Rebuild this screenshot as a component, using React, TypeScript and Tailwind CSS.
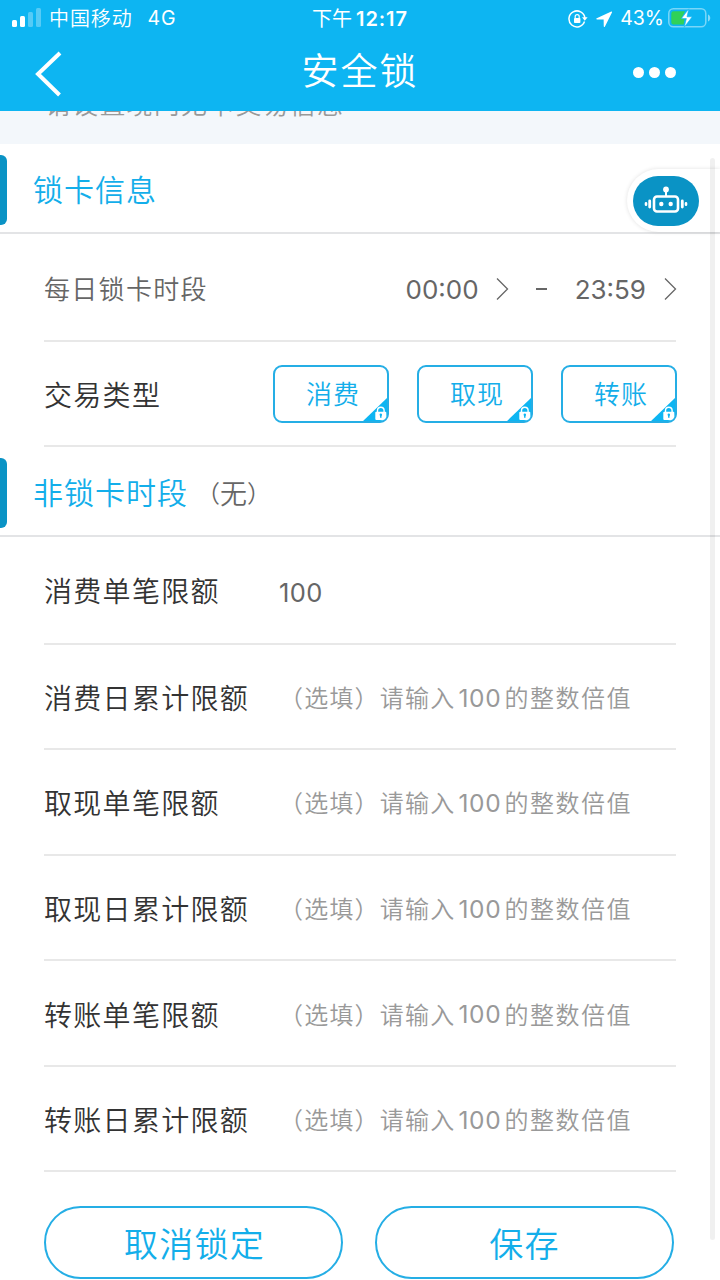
import type { ReactNode } from "react";

type LimitRow = {
  label: string;
  value?: string;
};

const TRADE_TYPES = ["消费", "取现", "转账"];

const LIMITS: LimitRow[] = [
  { label: "消费单笔限额", value: "100" },
  { label: "消费日累计限额" },
  { label: "取现单笔限额" },
  { label: "取现日累计限额" },
  { label: "转账单笔限额" },
  { label: "转账日累计限额" },
];

function StatusBar() {
  return (
    <div className="flex h-[37px] items-center text-[19px] leading-none font-normal">
      <div className="flex w-[290px] items-center pl-3">
        <svg className="-mt-[2px]" width="30" height="20" viewBox="0 0 30 20" fill="white">
          <rect x="0" y="12" width="5" height="7" rx="1.5" />
          <rect x="8" y="8" width="5" height="11" rx="1.5" />
          <rect x="16" y="4" width="5" height="15" rx="1.5" opacity="0.3" />
          <rect x="24" y="0" width="5" height="19" rx="1.5" opacity="0.3" />
        </svg>
        <span className="ml-[7px] pt-px text-[20px] font-[350] tracking-[0.9px]">中国移动</span>
        <span className="ml-[15px] pt-px text-[19.5px] tracking-[0.7px]">4G</span>
      </div>
      <div className="flex w-[140px] items-center justify-center pt-px whitespace-nowrap">
        <span className="text-[20px]">下午</span>
        <span className="ml-1 text-[20px] font-semibold tracking-[0.9px]">12:17</span>
      </div>
      <div className="flex flex-1 items-center justify-end pr-[9px]">
        <svg width="20" height="20" viewBox="0 0 20 20" fill="none">
          <path d="M16.5 12.6A8 8 0 1 1 16.9 9" stroke="white" strokeWidth="1.5" />
          <path d="M14 8.2h5.6l-2.8 3.6z" fill="white" />
          <rect x="6" y="9" width="6.4" height="5" rx="0.8" fill="white" />
          <path d="M7.2 9.2V7.6a2 2 0 0 1 4 0v1.6" stroke="white" strokeWidth="1.2" />
        </svg>
        <svg className="ml-2" width="17" height="18" viewBox="0 0 18 18" fill="white">
          <path d="M16.2 1.1 0.8 8.1c-.9.5-.6 1.3.3 1.3l7 .1.1 7.2c0 1 .9 1.2 1.3.3l7.4-15c.3-.7-.2-1.1-.7-.9z" />
        </svg>
        <span className="ml-[7px] text-[19.5px]">43%</span>
        <svg className="-mt-px ml-[4px]" width="43" height="20" viewBox="0 0 43 20" fill="none">
          <rect x="0.8" y="0.8" width="37" height="18" rx="4.6" stroke="white" strokeOpacity="0.45" strokeWidth="1.5" />
          <path d="M40 6.5v7c3-1.2 3-5.8 0-7z" fill="white" fillOpacity="0.5" />
          <path d="M5.5 3.2H17l-3.6 7.4h3.2l-1 5.9H5.5a2.2 2.2 0 0 1-2.2-2.2V5.4a2.2 2.2 0 0 1 2.2-2.2z" fill="#30d158" />
          <path d="M20.8 0.8 13.4 10.6h5l-2.2 8.6 8-10.4h-5.2z" fill="white" stroke="#0db5f2" strokeWidth="0.6" />
        </svg>
      </div>
    </div>
  );
}

function NavBar() {
  return (
    <div className="flex h-[74px] items-center justify-between pr-[44px] pl-[34px]">
      <svg className="-mt-px" width="28" height="46" viewBox="0 0 28 46" fill="none">
        <path d="M26 2 4 23l21.500 21" stroke="white" strokeWidth="4" />
      </svg>
      <h1 className="pb-[5px] pl-[25px] text-[37px] leading-none tracking-[2px]">安全锁</h1>
      <div className="-mt-[3px] flex gap-[5px]">
        <span className="size-[11px] rounded-full bg-white" />
        <span className="size-[11px] rounded-full bg-white" />
        <span className="size-[11px] rounded-full bg-white" />
      </div>
    </div>
  );
}

function SectionHeader({ title, children }: { title: string; children?: ReactNode }) {
  return (
    <div className="flex h-[90px] items-center border-b-2 border-[#e3e4e6] pt-[3px]">
      <span className="h-[70px] w-[7px] rounded-r-[6px] bg-[#0a93c5]" />
      <h2 className="ml-[26px] pt-px text-[30px] leading-none tracking-[1px] text-[#13aeea]">{title}</h2>
      {children}
    </div>
  );
}

function Chevron() {
  return (
    <svg width="13" height="24" viewBox="0 0 13 24" fill="none">
      <path d="m1 1.500 10.500 10.500L1 22.500" stroke="#666" strokeWidth="1.300" />
    </svg>
  );
}

function TradeTypeButton({ label }: { label: string }) {
  return (
    <button
      type="button"
      className="relative h-[58px] w-[116px] overflow-hidden rounded-[9px] border-2 border-[#25aee5] pt-[3px] pl-[4px] text-[26px] leading-none tracking-[1px] text-[#13aeea]"
    >
      {label}
      <svg className="absolute -right-px -bottom-px" width="26" height="25" viewBox="0 0 26 25">
        <path d="M26 0v25H0z" fill="#0db5f2" />
        <rect x="13.300" y="14.700" width="11" height="8.300" rx="1" fill="white" />
        <path d="M15.500 15v-1.500a3.300 3.300 0 0 1 6.600 0V15" fill="none" stroke="white" strokeWidth="1.400" />
        <path d="M18.800 17v3.700" stroke="#0db5f2" strokeWidth="1.500" />
        <circle cx="18.800" cy="17.700" r="1.200" fill="#0db5f2" />
      </svg>
    </button>
  );
}

function AssistantButton() {
  return (
    <div className="absolute top-[169px] right-0 z-20 flex h-[63px] w-[93px] items-center rounded-l-full bg-white pl-[6px] shadow-[0_0_4px_rgba(0,0,0,0.12)]">
      <button type="button" className="flex h-[50px] w-[66px] items-center justify-center rounded-[25px] bg-[#0a93c5]">
        <svg width="44" height="30" viewBox="0 0 44 30" fill="none" stroke="white">
          <rect x="10" y="10.500" width="24" height="15" rx="3" strokeWidth="2.600" />
          <circle cx="22" cy="3.500" r="2.900" fill="white" stroke="none" />
          <path d="M22 5v5" strokeWidth="2" />
          <circle cx="17.300" cy="18" r="2.200" fill="white" stroke="none" />
          <circle cx="26.700" cy="18" r="2.200" fill="white" stroke="none" />
          <path d="M5.700 15v6M38.300 15v6" strokeWidth="2.800" strokeLinecap="round" />
          <path d="M2 17.300v1.400M42 17.300v1.400" strokeWidth="2.600" strokeLinecap="round" />
        </svg>
      </button>
    </div>
  );
}

function LimitField({ label, value, first }: LimitRow & { first: boolean }) {
  return (
    <div className={`flex items-center border-b-2 border-[#e8e8e8] pt-[5px] ${first ? "h-[107.500px]" : "h-[105.600px]"}`}>
      <span className="w-[235px] text-[28px] leading-none tracking-[1.300px] text-[#333]">{label}</span>
      {value ? (
        <span className="text-[25.500px] leading-none font-normal tracking-[0.400px] text-[#666]">{value}</span>
      ) : (
        <span className="flex items-center text-[24px] leading-none whitespace-nowrap text-[#999]">
          <span className="tracking-[1.200px]">（选填）请输入</span>
          <span className="ml-[3px] pb-[2px] text-[24.500px] font-normal tracking-[0.700px]">100</span>
          <span className="ml-[3px] tracking-[1.500px]">的整数倍值</span>
        </span>
      )}
    </div>
  );
}

export default function App() {
  return (
    <div className="relative h-[1280px] w-[720px] overflow-hidden bg-white font-['Inter','Noto_Sans_CJK_SC',sans-serif] font-[350]">
      <header className="relative z-10 h-[111px] bg-[#0db5f2] text-white">
        <StatusBar />
        <NavBar />
      </header>

      {/* tail of the hint, scrolled under the header */}
      <div className="h-[33px] bg-[#f3f7fb] pl-[45px]">
        <p className="-translate-y-[19px] text-[26px] leading-none tracking-[1.200px] text-[#999]">请设置境内无卡交易信息</p>
      </div>

      <SectionHeader title="锁卡信息" />

      <div className="px-[44px]">
        <div className="flex h-[107.500px] items-center border-b-2 border-[#e8e8e8] pt-[5px] text-[26px] leading-none text-[#666]">
          <span className="flex-1 pt-px tracking-[1.300px]">每日锁卡时段</span>
          <span className="mr-[17px] pt-px font-normal">00:00</span>
          <Chevron />
          <span className="mr-[28px] ml-[27px] h-[2px] w-[11px] bg-[#666]" />
          <span className="mr-[18px] pt-px font-normal">23:59</span>
          <div className="-mr-px">
            <Chevron />
          </div>
        </div>
        <div className="flex h-[105.500px] items-center border-b-2 border-[#e8e8e8] pt-px">
          <span className="flex-1 pt-[4px] text-[28px] leading-none tracking-[1.300px] text-[#333]">交易类型</span>
          <div className="-mr-px flex gap-7">
            {TRADE_TYPES.map((type) => (
              <TradeTypeButton key={type} label={type} />
            ))}
          </div>
        </div>
      </div>

      <SectionHeader title="非锁卡时段">
        <span className="ml-[8px] flex items-center pt-[3px] text-[24px] leading-none text-[#666]">
          <span>（</span>
          <span className="text-[27px]">无</span>
          <span>）</span>
        </span>
      </SectionHeader>

      <div className="px-[44px]">
        {LIMITS.map((row, index) => (
          <LimitField key={row.label} label={row.label} value={row.value} first={index === 0} />
        ))}
      </div>

      <footer className="flex gap-8 pt-[33.500px] pl-[44px] text-[34px] leading-none tracking-[1.200px] text-[#13aeea]">
        <button type="button" className="h-[73px] w-[299px] rounded-full border-2 border-[#25aee5] pt-[6px] pl-[2px]">
          取消锁定
        </button>
        <button type="button" className="h-[73px] w-[299px] rounded-full border-2 border-[#25aee5] pt-[5px]">
          保存
        </button>
      </footer>

      <AssistantButton />

      {/* scroll indicator */}
      <div className="absolute top-[158px] right-[5px] z-30 h-[1082px] w-[5px] rounded-full bg-black/6" />
    </div>
  );
}
